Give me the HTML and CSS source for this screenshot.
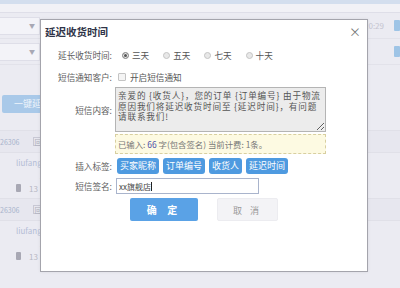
FILE: index.html
```html
<!DOCTYPE html>
<html lang="zh-CN">

<head>
    <meta charset="UTF-8">
    <meta name="viewport" content="width=device-width, initial-scale=1.0">
    <title>延迟收货时间</title>

    <link rel="stylesheet" href="styles.css">
</head>

<body>
    <!-- 背景页面 -->
    <div class="page">
        <div class="top"></div>
        <div class="bar"></div>
        <div class="filter">
            <div class="select"><span class="arrow">▼</span></div>
            <div class="filter-right">
                <span class="time">20:29</span>
                <span class="ico"></span>
            </div>
        </div>
        <div class="filter">
            <div class="select"><span class="arrow">▼</span></div>
            <div class="filter-right">
                <span class="ico"></span>
            </div>
        </div>
        <div class="action">
            <span class="btn-bg">一键延迟</span>
        </div>
        <div class="order">
            <div class="order-head">
                <span class="order-no">26306</span>
                <span class="tag-bg">回</span>
            </div>
            <div class="order-body">
                <span class="buyer">liufang</span>
                <span class="num">1</span>
                <span class="phone"><i class="phone-ico"></i>13</span>
            </div>
        </div>
        <div class="order">
            <div class="order-head">
                <span class="order-no">26306</span>
                <span class="tag-bg">回</span>
            </div>
            <div class="order-body">
                <span class="buyer">liufang</span>
                <span class="num">1</span>
                <span class="phone"><i class="phone-ico"></i>13</span>
            </div>
        </div>
    </div>

    <!-- 弹出框 -->
    <div class="dialog">
        <div class="dialog-title">
            <span>延迟收货时间</span>
            <a href="javascript:;" class="close">×</a>
        </div>
        <div class="form">
            <div class="row row-days">
                <label class="label">延长收货时间:</label>
                <div class="field">
                    <label class="opt"><input type="radio" name="days" checked>三天</label>
                    <label class="opt"><input type="radio" name="days">五天</label>
                    <label class="opt"><input type="radio" name="days">七天</label>
                    <label class="opt"><input type="radio" name="days">十天</label>
                </div>
            </div>
            <div class="row row-notify">
                <label class="label">短信通知客户:</label>
                <div class="field">
                    <label class="opt"><input type="checkbox">开启短信通知</label>
                </div>
            </div>
            <div class="row row-content">
                <label class="label label-top">短信内容:</label>
                <div class="field field-col">
                    <textarea class="sms">亲爱的 {收货人}，您的订单 {订单编号} 由于物流原因我们将延迟收货时间至 {延迟时间}，有问题请联系我们!</textarea>
                    <div class="count">已输入: <b>66</b> 字(包含签名) 当前计费: 1条。</div>
                </div>
            </div>
            <div class="row row-tags">
                <label class="label">插入标签:</label>
                <div class="field tags">
                    <span class="tag">买家昵称</span>
                    <span class="tag">订单编号</span>
                    <span class="tag">收货人</span>
                    <span class="tag">延迟时间</span>
                </div>
            </div>
            <div class="row row-sign">
                <label class="label">短信签名:</label>
                <div class="field">
                    <div class="input">xx旗舰店<span class="caret"></span></div>
                </div>
            </div>
            <div class="row row-btns">
                <span></span>
                <div class="field btns">
                    <a href="javascript:;" class="btn btn-ok">确 定</a>
                    <a href="javascript:;" class="btn btn-cancel">取 消</a>
                </div>
            </div>
        </div>
    </div>
</body>

</html>
```

FILE: styles.css
```css
* {
    padding: 0;
    margin: 0;
    box-sizing: border-box;
}

body {
    width: 400px;
    height: 288px;
    overflow: hidden;
    font-family: "Noto Sans CJK SC", "Liberation Sans", sans-serif;
    background: #ebebf2;
    position: relative;
}

/* 背景页面 */
.page {
    height: 288px;
    color: #b8bfd2;
    font-size: 9px;
}

.top {
    height: 4px;
    background: #d3deee;
}

.bar {
    height: 9px;
    background: #f1f1f6;
    border-bottom: 1px solid #dedee8;
}

.filter {
    display: flex;
    justify-content: space-between;
    align-items: center;
    height: 26px;
    border-bottom: 1px solid #e2e2ea;
}

.select {
    position: relative;
    width: 40px;
    height: 18px;
    background: #f3f3f8;
    border: 1px solid #dedee8;
    border-left: none;
}

.arrow {
    position: absolute;
    left: 29px;
    top: 3px;
    font-size: 6px;
    color: #a8a8b4;
}

.filter-right {
    display: flex;
    align-items: center;
    gap: 10px;
}

.time {
    color: #c4c4d0;
    font-size: 8px;
}

.ico {
    width: 6px;
    height: 11px;
    background: #9ec4e6;
    border-radius: 1px;
}

.action {
    padding: 30px 0 17px 2px;
}

.btn-bg {
    display: block;
    width: 60px;
    height: 18px;
    line-height: 18px;
    padding-left: 12px;
    background: #a9c9e9;
    color: #eef4fb;
    font-size: 9px;
    border-radius: 2px;
}

.order-head {
    display: flex;
    align-items: center;
    gap: 14px;
    height: 23px;
    border-top: 1px solid #e0e0e8;
    border-bottom: 1px solid #e0e0e8;
    background: #e7e7ef;
}

.order-no {
    font-size: 7px;
    color: #a8b4cc;
}

.tag-bg {
    width: 9px;
    height: 9px;
    font-size: 7px;
    line-height: 9px;
    text-align: center;
    border: 1px solid #c8c8d4;
    color: #b0b0bc;
}

.order-body {
    display: grid;
    grid-template-columns: 16px 30px;
    grid-template-rows: 13px 12px 12px;
    padding: 4px 0;
    height: 45px;
}

.buyer {
    grid-column: 2;
    font-size: 8px;
    color: #b4bdd6;
}

.num {
    grid-column: 2;
    text-align: right;
    padding-right: 2px;
    font-size: 8px;
    color: #b0b0bc;
}

.phone {
    grid-column: 1 / 3;
    display: flex;
    align-items: center;
    gap: 8px;
    padding-left: 16px;
    font-size: 8px;
    color: #b8b8c4;
}

.phone-ico {
    width: 5px;
    height: 8px;
    background: #a8a8b4;
    border-radius: 1px;
}

/* 弹出框 */
.dialog {
    position: absolute;
    left: 40px;
    top: 19px;
    width: 328px;
    height: 253px;
    background: #fff;
    border: 1px solid #a4a4ac;
    box-shadow: 0 0 3px rgba(0, 0, 0, 0.08);
}

.dialog-title {
    display: flex;
    justify-content: space-between;
    align-items: center;
    height: 23px;
    padding: 0 6px 0 4px;
    font-size: 10.5px;
    font-weight: bold;
    color: #2f3448;
}

.close {
    font-size: 12px;
    font-weight: normal;
    color: #777;
    text-decoration: none;
}

.form {
    padding-top: 5px;
    font-size: 8.6px;
    color: #555;
}

.row {
    display: grid;
    grid-template-columns: 71px 1fr;
    column-gap: 3px;
    align-items: center;
}

.label {
    text-align: right;
    color: #606060;
    line-height: 14px;
}

.label-top {
    align-self: start;
    padding-top: 16px;
}

.field {
    display: flex;
    align-items: center;
}

.field-col {
    flex-direction: column;
    align-items: stretch;
    width: 211px;
}

.row-days {
    height: 14px;
}

.row-notify {
    height: 14px;
    margin-top: 8px;
}

.opt {
    display: flex;
    align-items: center;
    margin-right: 7px;
    line-height: 14px;
    color: #555;
}

.opt input {
    appearance: none;
    width: 7px;
    height: 7px;
    margin: 0 3px 0 7px;
    border: 1px solid #c4c4c4;
    background: #e8e8e8;
    border-radius: 50%;
}

.opt input:checked {
    background: #555;
    border-color: #999;
    box-shadow: inset 0 0 0 1px #eee;
}

.opt input[type="checkbox"] {
    width: 8px;
    height: 8px;
    margin: 0 4px 0 3px;
    border-radius: 1px;
    background: #f4f4f4;
}

.row-content {
    margin-top: 3px;
}

.sms {
    display: block;
    width: 211px;
    height: 45px;
    padding: 2px;
    border: 1px solid #b4b4b4;
    background: #ececec;
    font-family: "Noto Sans CJK SC", "Liberation Sans", sans-serif;
    font-size: 8.6px;
    line-height: 10.5px;
    letter-spacing: 0.85px;
    color: #555;
}

.count {
    margin-top: 2px;
    height: 20px;
    line-height: 18px;
    padding-left: 2px;
    border: 1px dashed #d8cfa0;
    background: #fdfae2;
    color: #777;
    font-size: 8.4px;
}

.count b {
    font-weight: normal;
    color: #4b4fa8;
}

.row-tags {
    margin-top: 4px;
}

.tags {
    gap: 4px;
    padding-left: 2px;
}

.tag {
    height: 16px;
    line-height: 16px;
    padding: 0 3px;
    background: #4e9ae0;
    color: #fff;
    font-size: 9px;
    border-radius: 3px;
}

.row-sign {
    margin-top: 4px;
}

.input {
    display: flex;
    align-items: center;
    width: 143px;
    height: 16px;
    margin-left: 1px;
    padding-left: 2px;
    border: 1px solid #a9b4cc;
    font-size: 8px;
    color: #444;
}

.caret {
    width: 1px;
    height: 9px;
    background: #222;
}

.row-btns {
    margin-top: 4px;
}

.btns {
    gap: 19px;
    padding-left: 15px;
}

.btn {
    height: 23px;
    line-height: 23px;
    text-align: center;
    text-decoration: none;
    font-size: 10px;
    border-radius: 2px;
}

.btn-ok {
    width: 68px;
    background: #5aa2e6;
    color: #fff;
    font-weight: bold;
    letter-spacing: 4px;
}

.btn-cancel {
    width: 61px;
    background: #f3f3f6;
    border: 1px solid #ececf0;
    color: #999;
    letter-spacing: 3px;
    font-size: 9px;
}
```
